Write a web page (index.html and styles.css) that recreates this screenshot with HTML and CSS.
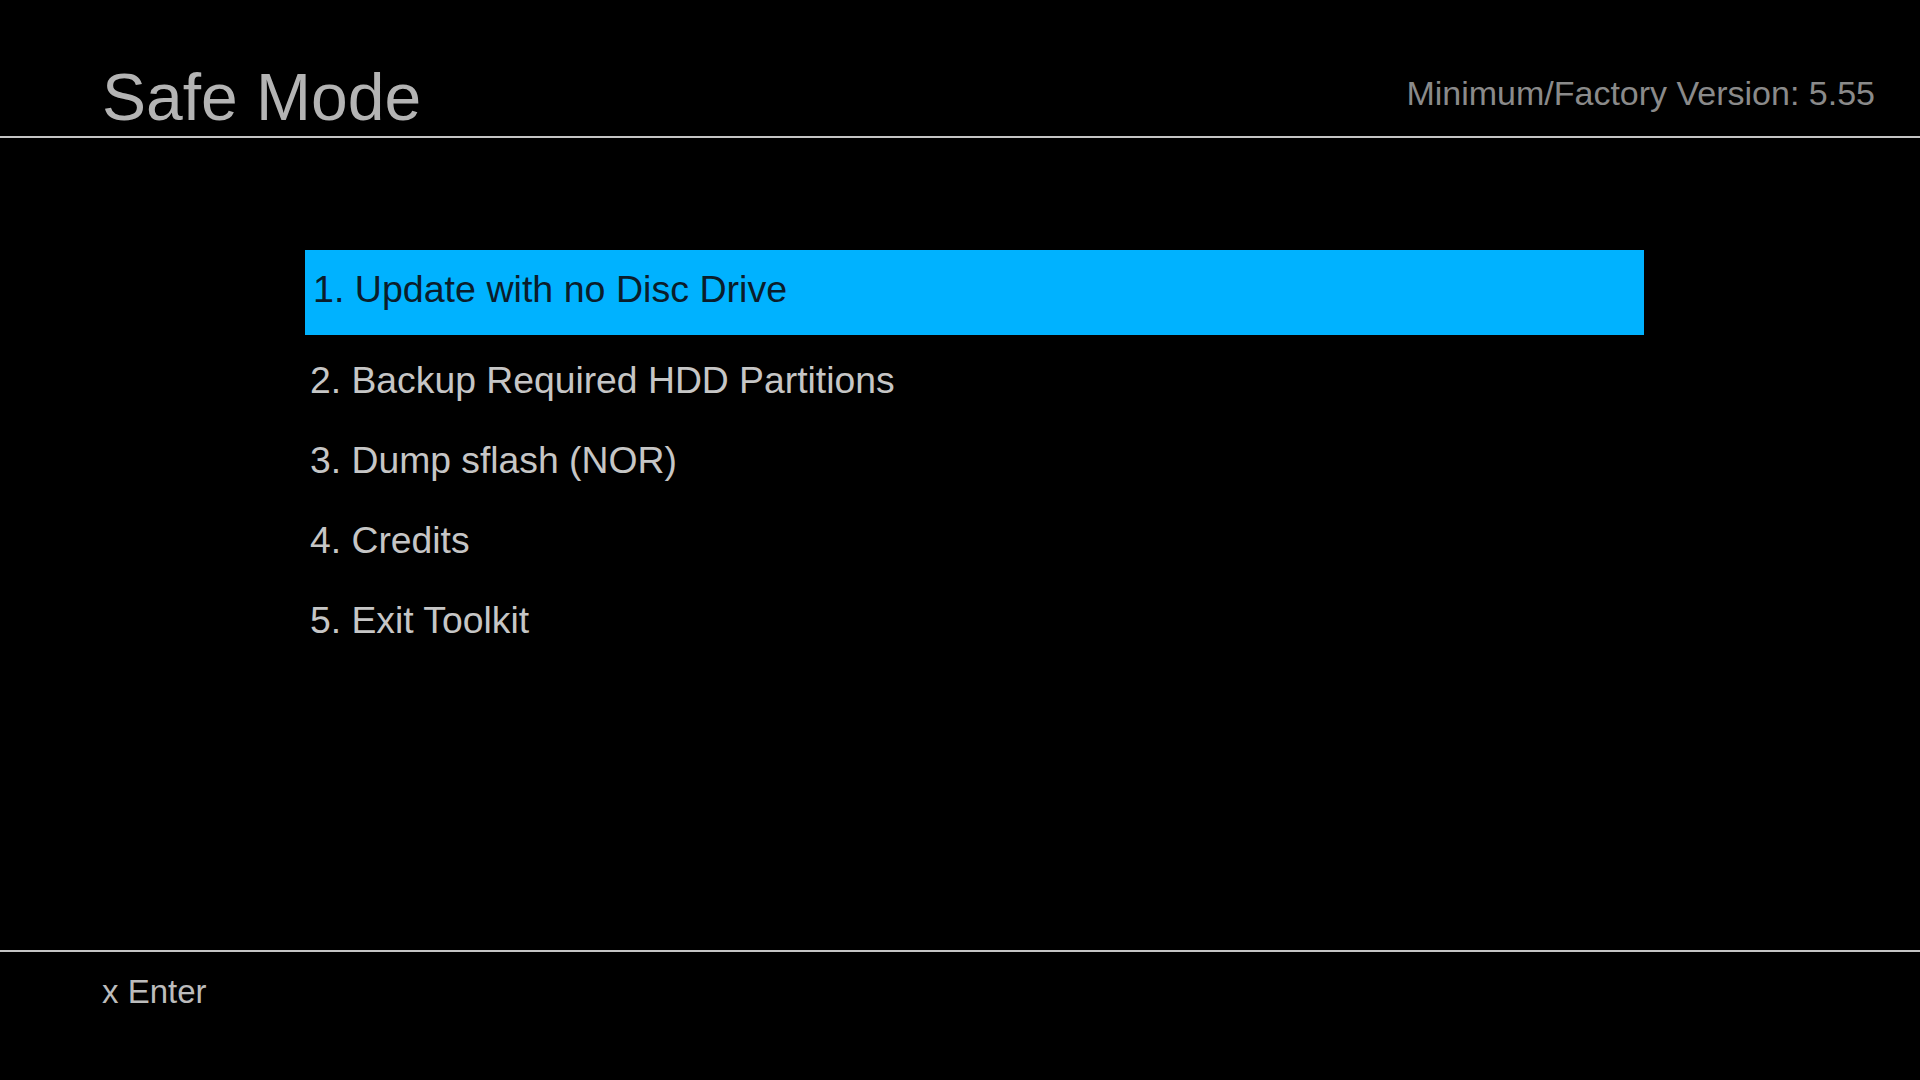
FILE: index.html
```html
<!DOCTYPE html>
<html lang="en">
<head>
    <meta charset="UTF-8">
    <meta name="viewport" content="width=device-width, initial-scale=1.0">
    <title>Safe Mode</title>
    <link rel="stylesheet" href="styles.css">
</head>
<body>
<div class="screen">
    <header class="top-bar">
        <h1 class="title">Safe Mode</h1>
        <div class="version">Minimum/Factory Version: 5.55</div>
    </header>

    <main class="menu-area">
        <ul class="menu">
            <li class="menu-item selected">1. Update with no Disc Drive</li>
            <li class="menu-item">2. Backup Required HDD Partitions</li>
            <li class="menu-item">3. Dump sflash (NOR)</li>
            <li class="menu-item">4. Credits</li>
            <li class="menu-item">5. Exit Toolkit</li>
        </ul>
    </main>

    <footer class="bottom-bar">
        <span class="hint">x Enter</span>
    </footer>
</div>
</body>
</html>
```

FILE: styles.css
```css
html, body {
    margin: 0;
    padding: 0;
    background-color: #000;
}

body {
    font-family: "Liberation Sans", Arial, sans-serif;
}

.screen {
    display: flex;
    flex-direction: column;
    width: 1920px;
    height: 1080px;
}

/* header with title and version */
.top-bar {
    box-sizing: border-box;
    height: 138px;
    display: flex;
    justify-content: space-between;
    align-items: flex-start;
    padding: 64px 45px 0 102px;
    border-bottom: 2px solid #c4c4c4;
}

.title {
    margin: 0;
    font-size: 66px;
    line-height: 66px;
    font-weight: normal;
    color: #b4b4b4;
}

.version {
    margin-top: 12px;
    font-size: 34px;
    line-height: 34px;
    color: #8a8a8a;
}

/* menu list */
.menu-area {
    flex: 1;
    padding: 112px 0 0 305px;
}

.menu {
    list-style: none;
    margin: 0;
    padding: 0;
    width: 1339px;
}

.menu-item {
    font-size: 37.3px;
    line-height: 80px;
    padding-left: 5px;
    color: #c6c6c6;
}

.menu-item.selected {
    font-size: 37.6px;
    line-height: 78px;
    padding-bottom: 7px;
    padding-left: 8px;
    margin-bottom: 5px;
    background-color: #00b2ff;
    color: #0b1d2b;
}

/* footer hint */
.bottom-bar {
    box-sizing: border-box;
    height: 130px;
    border-top: 2px solid #c4c4c4;
    padding: 23px 0 0 102px;
}

.hint {
    font-size: 33px;
    line-height: 33px;
    color: #bcbcbc;
}
```
